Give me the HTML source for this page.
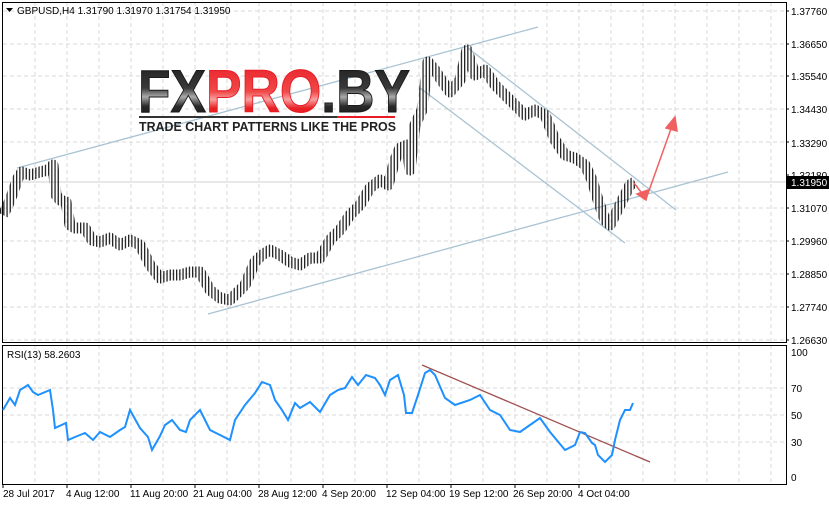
<!DOCTYPE html>
<html><head><style>
body{margin:0;background:#fff;}
svg{display:block;font-family:"Liberation Sans",sans-serif;}
</style></head><body>
<svg width="829" height="505" viewBox="0 0 829 505" xmlns="http://www.w3.org/2000/svg">
<defs>
<pattern id="bars" patternUnits="userSpaceOnUse" width="3.2" height="20"><rect x="0" y="0" width="1.3" height="20" fill="#222"/></pattern>
<linearGradient id="bk" x1="0" y1="0" x2="0" y2="1"><stop offset="0" stop-color="#1a1a1a"/><stop offset="0.45" stop-color="#3a3a3a"/><stop offset="0.58" stop-color="#aaa"/><stop offset="0.72" stop-color="#2a2a2a"/><stop offset="1" stop-color="#111"/></linearGradient>
<linearGradient id="rd" x1="0" y1="0" x2="0" y2="1"><stop offset="0" stop-color="#e81c24"/><stop offset="0.5" stop-color="#f04848"/><stop offset="0.62" stop-color="#f8a0a0"/><stop offset="0.75" stop-color="#e82024"/><stop offset="1" stop-color="#e81c24"/></linearGradient>
</defs>
<rect width="829" height="505" fill="#fff"/>
<g stroke="#d8d8d8" stroke-dasharray="4,3" stroke-width="1">
<path d="M35 2V342M67 2V342M99 2V342M131 2V342M163 2V342M195 2V342M227 2V342M259 2V342M291 2V342M323 2V342M355 2V342M387 2V342M419 2V342M451 2V342M483 2V342M515 2V342M547 2V342M579 2V342M611 2V342M643 2V342M675 2V342M707 2V342M739 2V342M771 2V342"/>
<path d="M35 345V484M67 345V484M99 345V484M131 345V484M163 345V484M195 345V484M227 345V484M259 345V484M291 345V484M323 345V484M355 345V484M387 345V484M419 345V484M451 345V484M483 345V484M515 345V484M547 345V484M579 345V484M611 345V484M643 345V484M675 345V484M707 345V484M739 345V484M771 345V484"/>
<path d="M3 11H786M3 44H786M3 76H786M3 109H786M3 142H786M3 208H786M3 241H786M3 274H786M3 307H786M3 340H786"/>
<path d="M3 388H786M3 415H786M3 442H786"/>
</g>
<line x1="3" y1="182" x2="786" y2="182" stroke="#d0d0d0"/>
<rect x="2.5" y="2.5" width="784" height="340" fill="none" stroke="#000"/>
<rect x="2.5" y="345.5" width="784" height="139" fill="none" stroke="#000"/>
<g stroke="#a9c3d3" stroke-width="1.3">
<line x1="17" y1="168" x2="538" y2="27"/>
<line x1="208" y1="314" x2="728" y2="172"/>
<line x1="468" y1="48" x2="676" y2="210"/>
<line x1="420" y1="88" x2="625" y2="243"/>
</g>
<polyline fill="none" stroke="url(#bars)" stroke-width="11" stroke-linejoin="round" points="3,215 8,205 12,195 18,178 22,172 30,175 40,172 48,170 53,165 56,195 60,200 66,202 70,225 75,228 85,228 92,240 100,242 110,238 120,245 130,240 140,245 150,265 160,278 170,275 180,275 190,272 200,272 210,290 220,298 230,300 235,295 245,285 255,262 262,255 270,250 280,255 290,262 300,265 310,258 320,258 330,240 340,230 350,215 360,205 370,188 380,180 388,185 395,160 400,148 407,145 410,170 415,125 422,110 428,62 435,70 440,78 450,92 460,80 467,50 475,75 485,70 495,85 505,95 515,105 525,115 535,110 545,115 555,140 565,155 575,158 585,165 592,180 598,200 605,220 610,225 615,215 620,205 625,195 630,185 635,182"/>
<g stroke="#f06060" stroke-width="1.5" fill="#f06060">
<line x1="634" y1="183" x2="644" y2="196"/>
<polygon points="637,194 648,190 646,200"/>
<line x1="646" y1="199" x2="672" y2="126"/>
<polygon points="675,117 666,128 677,131"/>
</g>
<line x1="422" y1="365" x2="650" y2="462" stroke="#a05050" stroke-width="1.3"/>
<polyline fill="none" stroke="#1e90ff" stroke-width="2" points="3,410 10,398 15,405 20,390 28,385 33,392 38,395 50,390 53,410 55,428 66,423 68,440 75,437 85,433 93,440 100,432 110,437 120,430 125,427 130,410 140,428 148,437 152,450 160,436 165,425 172,420 180,430 186,432 190,420 200,410 210,430 220,435 230,440 235,420 245,405 255,393 262,382 270,385 275,400 282,410 288,420 295,403 300,408 310,402 320,412 330,395 338,390 345,388 352,377 358,385 366,375 375,378 380,385 385,395 390,380 398,375 404,395 406,413 412,413 418,395 425,373 430,370 435,375 445,398 455,405 470,400 480,395 490,410 500,415 510,430 520,432 530,425 540,418 550,432 565,450 575,445 580,432 585,433 592,443 595,445 598,455 605,462 612,455 615,440 620,420 625,410 630,410 633,403"/>
<g font-size="10" fill="#000">
<path d="M6 8h7l-3.5 4z" fill="#000"/>
<text x="17" y="14">GBPUSD,H4  1.31790 1.31970 1.31754 1.31950</text>
<text x="7" y="358">RSI(13) 58.2603</text>
<text x="791" y="15">1.37760</text>
<text x="791" y="48">1.36650</text>
<text x="791" y="80">1.35540</text>
<text x="791" y="113">1.34430</text>
<text x="791" y="147">1.33290</text>
<text x="791" y="179">1.32180</text>
<text x="791" y="212">1.31070</text>
<text x="791" y="245">1.29960</text>
<text x="791" y="278">1.28850</text>
<text x="791" y="311">1.27740</text>
<text x="791" y="344">1.26630</text>
<text x="791" y="356">100</text>
<text x="791" y="392">70</text>
<text x="791" y="419">50</text>
<text x="791" y="446">30</text>
<text x="791" y="481">0</text>
<text x="3" y="497">28 Jul 2017</text>
<text x="66" y="497">4 Aug 12:00</text>
<text x="130" y="497">11 Aug 20:00</text>
<text x="193" y="497">21 Aug 04:00</text>
<text x="258" y="497">28 Aug 12:00</text>
<text x="322" y="497">4 Sep 20:00</text>
<text x="386" y="497">12 Sep 04:00</text>
<text x="449" y="497">19 Sep 12:00</text>
<text x="513" y="497">26 Sep 20:00</text>
<text x="578" y="497">4 Oct 04:00</text>
</g>
<rect x="787" y="176" width="42" height="13" fill="#000"/>
<text x="791" y="186" font-size="10" fill="#fff">1.31950</text>
<g stroke="#000"><path d="M786 11h3M786 44h3M786 76h3M786 109h3M786 142h3M786 175h3M786 208h3M786 241h3M786 274h3M786 307h3M786 340h3M3 484v4M67 484v4M131 484v4M195 484v4M259 484v4M323 484v4M387 484v4M451 484v4M515 484v4M579 484v4"/></g>
<text x="138" y="112" font-size="60" font-weight="bold" textLength="272" lengthAdjust="spacingAndGlyphs" fill="url(#bk)" stroke="#1a1a1a" stroke-width="1">FX<tspan fill="url(#rd)" stroke="#e81c24">PRO</tspan>.BY</text>
<rect x="139" y="116" width="198" height="2" fill="#333"/>
<rect x="337" y="116" width="58" height="2" fill="#e81c24"/>
<text x="139" y="131" font-size="13" font-weight="bold" fill="#222" textLength="257" lengthAdjust="spacingAndGlyphs">TRADE CHART PATTERNS LIKE THE PROS</text>
</svg>
</body></html>
